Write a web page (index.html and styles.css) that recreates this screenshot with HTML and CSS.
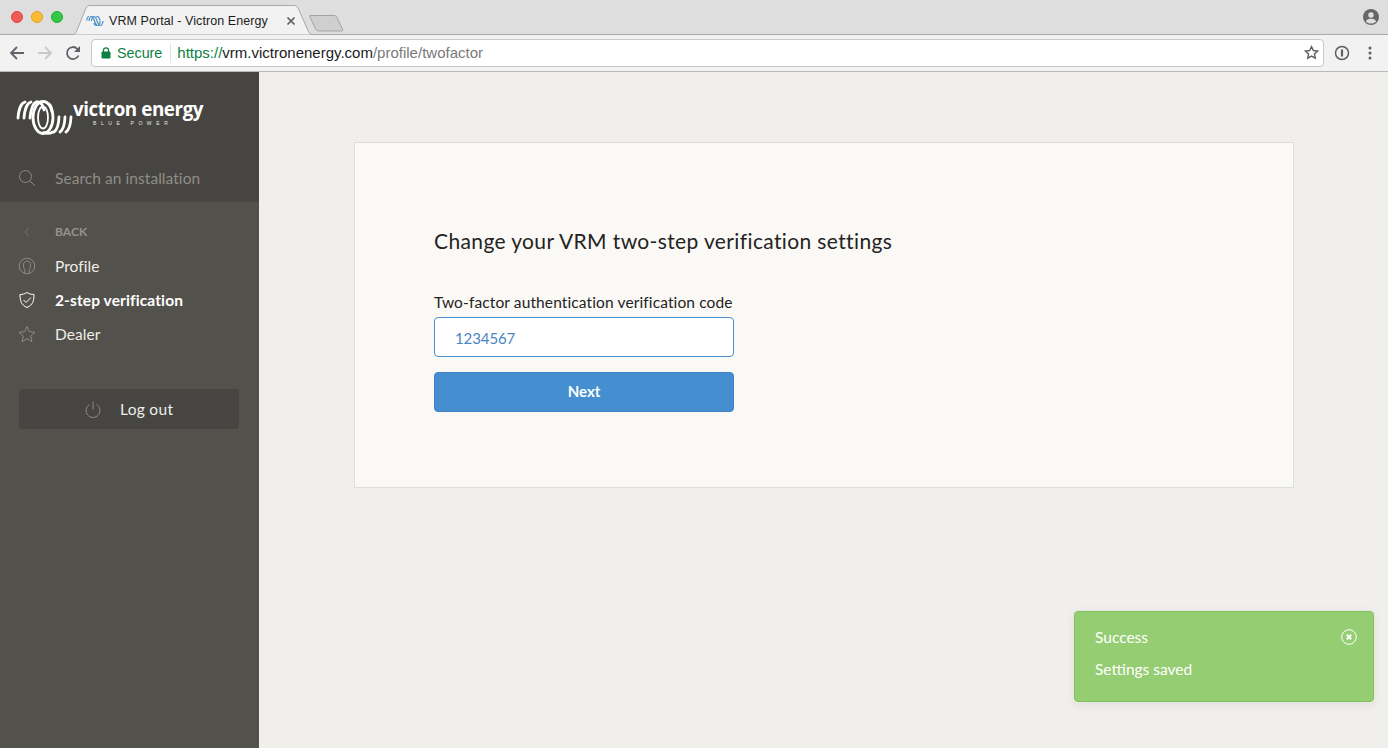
FILE: index.html
```html
<!DOCTYPE html>
<html lang="en">
<head>
<meta charset="utf-8">
<title>VRM Portal - Victron Energy</title>
<link rel="stylesheet" href="styles.css">
</head>
<body>
<header class="chrome">
  <div class="tabstrip">
    <div class="lights"><i class="light red"></i><i class="light yellow"></i><i class="light green"></i></div>
    <div class="tab">
      <svg class="tab-shape" width="244" height="30" viewBox="0 0 244 30"><path d="M0 29.500h1.500c2 0 3-1 4-3L15 3c.8-1.800 2-2.500 4-2.500h204c2 0 3.200.7 4 2.500l10.500 23.500c1 2 2 3 4 3H244" fill="#f2f2f2" stroke="#a8a8a8"/></svg>
      <svg class="tab-fav" width="18" height="12" viewBox="0 0 18 12" fill="none" stroke="#4a90c8" stroke-width="1.200"><path d="M.8 5.500C1 3 2 1.500 3 1.500M3 6C3.200 3.500 4 1.500 5.500 1.500c3 0 3 9 6 9 1.500 0 2.500-2 2.700-4.500M5.500 6C5.700 3.500 6.500 1.500 8 1.500c3 0 3 9 6 9 1.500 0 2.700-2 3-4.500M8 8c.3 1.500 1 2.500 2.500 2.500M9.500 3c.5-1 1-1.500 2-1.500 1.500 0 2 2 2.500 4"/></svg>
      <span class="tab-title">VRM Portal - Victron Energy</span>
      <svg class="tab-close" width="10" height="10" viewBox="0 0 10 10"><path d="M1.500 1.500l7 7M8.500 1.500l-7 7" stroke="#5a5a5a" stroke-width="1.600"/></svg>
    </div>
    <svg class="newtab" width="35" height="18" viewBox="0 0 35 18"><path d="M1 1.500h24c1.500 0 2 .5 2.700 1.500l5.800 12c.5 1.200 0 2-1.300 2H9.500c-1.300 0-2-.5-2.600-1.500L.8 2.500C.5 1.800.5 1.500 1 1.500z" fill="#cfcfcf" stroke="#a3a3a3"/></svg>
    <svg class="avatar" width="16" height="16" viewBox="0 0 16 16"><circle cx="8" cy="8" r="8" fill="#666"/><circle cx="8" cy="6" r="2.700" fill="#dedede"/><path d="M2.800 12.300C4 10.400 6 9.800 8 9.800s4 .6 5.200 2.500C12 13.900 10 14.600 8 14.600s-4-.7-5.200-2.300z" fill="#dedede"/></svg>
  </div>
  <div class="toolbar">
    <svg class="nav-icon" width="16" height="16" viewBox="0 0 16 16" fill="none" stroke="#5f6368" stroke-width="1.800"><path d="M15 8H2M8 2L2 8l6 6"/></svg>
    <svg class="nav-icon" width="16" height="16" viewBox="0 0 16 16" fill="none" stroke="#c9c9c9" stroke-width="1.800"><path d="M1 8h13M8 2l6 6-6 6"/></svg>
    <svg class="nav-icon" width="16" height="16" viewBox="0 0 16 16" fill="none" stroke="#5f6368" stroke-width="1.800"><path d="M13.500 10.500A6 6 0 1 1 12.300 3.800L14.500 6"/><path d="M15 1v6H9" fill="#5f6368" stroke="none"/></svg>
    <div class="omnibox">
      <svg class="lock" width="10" height="12" viewBox="0 0 10 12"><rect x="0.500" y="4.500" width="9" height="7" rx="1" fill="#0b8043"/><path d="M2.500 5V3.300a2.500 2.500 0 0 1 5 0V5" fill="none" stroke="#0b8043" stroke-width="1.300"/></svg>
      <span class="secure">Secure</span>
      <span class="divider"></span>
      <span class="url"><span class="scheme">https://</span><span class="host">vrm.victronenergy.com</span><span class="path">/profile/twofactor</span></span>
      <svg class="bookmark" width="15" height="15" viewBox="0 0 24 24" fill="none" stroke="#5f5f5f" stroke-width="2.200"><path d="M12 2.500l2.900 6.300 6.900.8-5.100 4.700 1.400 6.800-6.100-3.400-6.100 3.400 1.400-6.800-5.100-4.700 6.900-.8z"/></svg>
    </div>
    <svg class="ext" width="16" height="16" viewBox="0 0 16 16" fill="none"><circle cx="8" cy="8" r="6.500" stroke="#5f5f5f" stroke-width="1.500"/><path d="M8 4.500v7" stroke="#5f5f5f" stroke-width="2.200"/></svg>
    <svg class="menu" width="4" height="14" viewBox="0 0 4 14" fill="#5f5f5f"><circle cx="2" cy="2" r="1.500"/><circle cx="2" cy="7" r="1.500"/><circle cx="2" cy="12" r="1.500"/></svg>
  </div>
</header>

<div class="app">
  <aside class="sidebar">
    <div class="side-head">
      <div class="logo">
        <svg class="coil" width="58" height="37" viewBox="0 0 58 37" fill="none" stroke="#fff" stroke-width="2.800" stroke-linecap="round">
          <path d="M2 19C2.500 11 5 4 9 3M8 19C8.500 11 11 4 15 3M14 19C14.500 11 17 3.500 21 3"/>
          <ellipse cx="27" cy="18.500" rx="10" ry="16"/>
          <ellipse cx="27" cy="18.500" rx="5" ry="11" stroke-width="1.800"/>
          <path d="M21 3c5 0 6 4 7 8M33 5c2 2 3 5 3 8"/>
          <path d="M43 18c-.3 7-2 13-5 15M49 18c-.3 7-2 13-5 15M55 18c-.3 7-2 13-5 15M37 33c-3 1.500-7 1.500-9 .5"/>
        </svg>
        <div class="logo-text">
          <span class="wordmark">victron energy</span>
          <span class="tagline">BLUE POWER</span>
        </div>
      </div>
      <div class="search">
        <svg class="side-icon" width="18" height="18" viewBox="0 0 18 18" fill="none" stroke="#8c8a85" stroke-width="1"><circle cx="7.500" cy="7.500" r="6"/><path d="M11.800 11.800l5.200 5.200"/></svg>
        <span class="search-text">Search an installation</span>
      </div>
    </div>
    <nav class="side-nav">
      <div class="nav-row back-row">
        <svg class="side-icon" width="18" height="10" viewBox="0 0 18 10" fill="none" stroke="#777570"><path d="M11 .5L7 5l4 4.500"/></svg>
        <span class="back">BACK</span>
      </div>
      <div class="nav-row">
        <svg class="side-icon" width="18" height="18" viewBox="0 0 18 18" fill="none" stroke="#8c8a85"><circle cx="9" cy="9" r="7.800"/><path d="M6.800 16.500v-4C5.600 11 5.500 9.500 5.500 8c0-2.500 1.500-4 3.500-4s3.500 1.500 3.500 4c0 1.500-.1 3-1.300 4.500v4"/></svg>
        <span>Profile</span>
      </div>
      <div class="nav-row active">
        <svg class="side-icon" width="18" height="18" viewBox="0 0 18 18" fill="none" stroke="#fff"><path d="M9 1.500c2 1.300 4.500 2 7 2 0 6-1 10.500-7 13-6-2.500-7-7-7-13 2.500 0 5-.7 7-2z"/><path d="M5.500 9l2.500 2.500 5-5"/></svg>
        <span>2-step verification</span>
      </div>
      <div class="nav-row">
        <svg class="side-icon" width="18" height="18" viewBox="0 0 18 18" fill="none" stroke="#8c8a85"><path d="M9 1.500l2.300 5.200 5.700.6-4.300 3.800 1.300 5.600L9 13.800l-5 2.900 1.300-5.600L1 7.300l5.700-.6z"/></svg>
        <span>Dealer</span>
      </div>
      <button class="logout" type="button">
        <svg width="16" height="17" viewBox="0 0 16 17" fill="none" stroke="#8c8a85"><path d="M8 .5v8M4.500 3.500a7 7 0 1 0 7 0"/></svg>
        <span>Log out</span>
      </button>
    </nav>
  </aside>
  <main class="main">
    <section class="card">
      <h1 class="title">Change your VRM two-step verification settings</h1>
      <label class="label" for="code">Two-factor authentication verification code</label>
      <input class="input" id="code" type="text" value="1234567">
      <button class="next" type="button">Next</button>
    </section>
  </main>
</div>

<div class="toast">
  <div class="toast-head">
    <span>Success</span>
    <svg width="16" height="16" viewBox="0 0 16 16" fill="none" stroke="#fff"><circle cx="8" cy="8" r="7.300"/><path d="M5.800 5.800l4.400 4.400M10.200 5.800l-4.400 4.400" stroke-width="2"/></svg>
  </div>
  <div class="toast-body">Settings saved</div>
</div>
</body>
</html>
```
FILE: styles.css
```css
* { box-sizing: border-box; }
html, body { margin: 0; height: 100%; overflow: hidden; }
body { display: flex; flex-direction: column; height: 748px; font-family: "Lato", "Open Sans", sans-serif; background: #f0efeb; }

.chrome { flex: none; height: 72px; font-family: "Liberation Sans", Arial, sans-serif; }
.tabstrip { height: 35px; background: #dedede; border-bottom: 1px solid #a8a8a8; display: flex; position: relative; }
.lights { display: flex; gap: 8px; padding: 11px 0 0 11px; width: 71px; }
.light { width: 12px; height: 12px; border-radius: 50%; }
.red { background: #f15b55; border: 1px solid #e0443e; }
.yellow { background: #fbbc34; border: 1px solid #dfa023; }
.green { background: #35c748; border: 1px solid #1fb02f; }
.tab { position: relative; width: 244px; height: 35px; flex: none; }
.tab-shape { position: absolute; left: 0; top: 5px; }
.tab-fav { position: absolute; left: 15px; top: 15px; }
.tab-title { position: absolute; left: 38px; top: 14px; font-size: 12.500px; letter-spacing: .08px; line-height: 14px; color: #1c1c1c; white-space: nowrap; }
.tab-close { position: absolute; left: 215px; top: 16px; }
.newtab { margin: 14px 0 0 -6px; }
.avatar { position: absolute; left: 1363px; top: 9px; }

.toolbar { height: 37px; background: #f2f2f2; border-bottom: 1px solid #b9b9b9; display: flex; align-items: center; padding: 0 0 1px 9px; }
.nav-icon { flex: none; margin-right: 12px; }
.omnibox { flex: none; width: 1233px; height: 28px; margin-left: -2px; background: #fff; border: 1px solid #c8c8c8; border-radius: 4px; display: flex; align-items: center; padding: 0 4px 0 9px; font-size: 14px; }
.lock { flex: none; }
.secure { color: #0b8043; margin-left: 6px; font-size: 14.300px; }
.divider { width: 1px; height: 20px; background: #e2e2e2; margin: 0 6px 0 8px; }
.url { flex: 1; white-space: nowrap; font-size: 15px; }
.scheme { color: #0b8043; }
.host { color: #1c1c1c; }
.path { color: #7a7a7a; }
.bookmark { flex: none; margin-right: 0; }
.ext { flex: none; margin-left: 10px; }
.menu { flex: none; margin-left: 18px; }

.app { flex: 1; display: flex; min-height: 0; }
.sidebar { flex: none; width: 259px; background: #53514c; display: flex; flex-direction: column; }
.side-head { height: 130px; background: #474541; display: flex; flex-direction: column; }
.logo { height: 87px; display: flex; padding: 27px 0 0 16px; }
.coil { flex: none; }
.logo-text { display: flex; flex-direction: column; margin: 0 0 0 -1px; }
.wordmark { color: #fff; font-family: "Open Sans", sans-serif; font-weight: 700; font-size: 18.800px; line-height: 21px; letter-spacing: -.42px; white-space: nowrap; }
.tagline { color: #e6e5e1; font-family: "Liberation Sans", sans-serif; font-size: 5px; line-height: 6px; letter-spacing: 4.600px; padding-left: 20px; white-space: nowrap; }
.search { display: flex; align-items: center; padding-left: 18px; height: 38px; }
.side-icon { flex: none; width: 18px; margin-right: 19px; }
.search-text { color: #8f8e89; font-size: 15.500px; letter-spacing: .06px; }

.side-nav { display: flex; flex-direction: column; padding-top: 12px; }
.nav-row { display: flex; align-items: center; height: 34px; padding-left: 18px; color: #eeeeea; font-size: 15.500px; letter-spacing: .06px; }
.back-row { height: 35px; }
.back { color: #94928d; font-size: 12px; font-weight: 700; }
.active { color: #fff; font-weight: 700; letter-spacing: .12px; }
.logout { display: flex; align-items: center; justify-content: flex-start; gap: 19px; width: 220px; height: 40px; margin: 38px 0 0 19px; padding: 0 0 0 66px; background: #474541; border: 0; border-radius: 4px; color: #eeeeea; font: 15.500px "Lato", sans-serif; letter-spacing: .3px; }

.main { flex: 1; padding: 70px 94px 0 95px; }
.card { height: 346px; background: #faf9f5; border: 1px solid #dededa; padding: 84px 79px 0; display: flex; flex-direction: column; align-items: flex-start; }
.title { margin: 0; font-size: 21px; line-height: 28px; font-weight: 400; letter-spacing: .37px; color: #24231f; }
.label { margin-top: 37px; font-size: 15.500px; line-height: 20px; letter-spacing: .12px; color: #24231f; }
.input { width: 300px; height: 40px; margin-top: 5px; padding: 2px 20px 0; background: #fff; border: 1px solid #4a90d0; border-radius: 4px; color: #4a86c5; font: 15px "Lato", sans-serif; letter-spacing: -.1px; outline: 0; }
.next { width: 300px; height: 40px; margin-top: 15px; padding: 0 0 2px; background: #458fd0; border: 1px solid #3c82c4; border-radius: 4px; color: #fff; font: 700 15px "Lato", sans-serif; }

.toast { position: absolute; left: 1074px; top: 611px; width: 300px; height: 91px; padding: 15px 16px 0 20px; background: #95cd73; border: 1px solid #82c25f; border-radius: 4px; box-shadow: 0 2px 10px rgba(0, 0, 0, .08); color: #fff; font-size: 15.500px; }
.toast-head { display: flex; justify-content: space-between; align-items: center; height: 20px; }
.toast-body { margin-top: 12px; line-height: 20px; }
```
